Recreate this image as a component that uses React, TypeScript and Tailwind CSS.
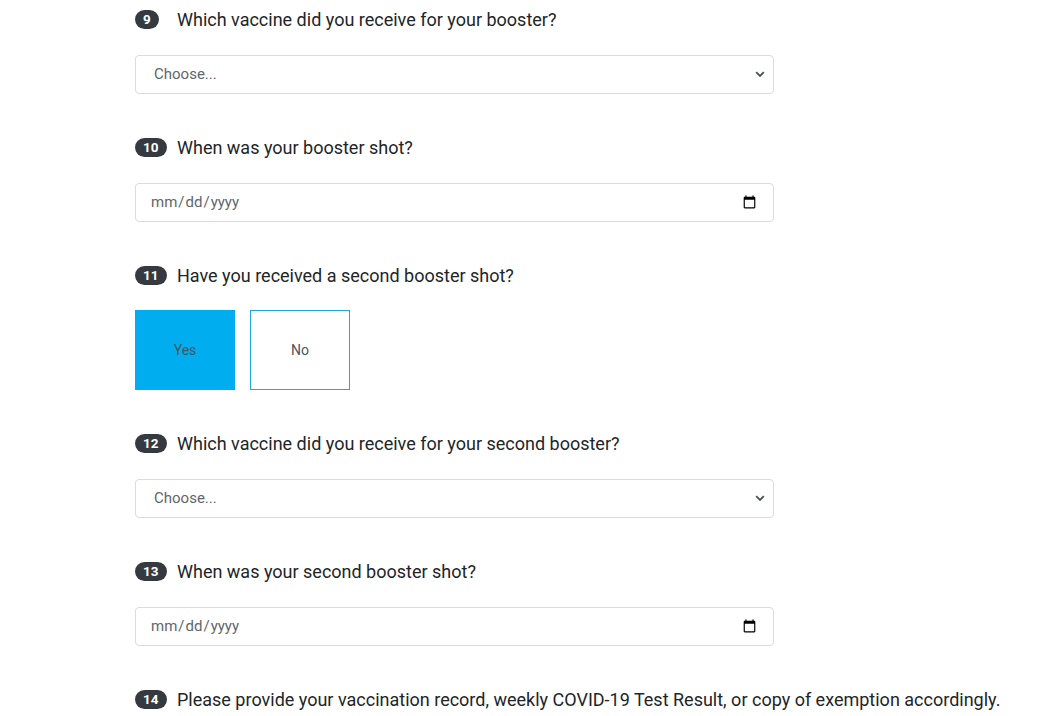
import React from "react";

const Badge = ({ n }: { n: string }) => (
  <div className="w-[42px] shrink-0 flex items-center">
    <span className="inline-flex items-center justify-center h-[19px] px-[8px] rounded-full bg-[#343a40] text-white text-[13.5px] font-bold leading-none">
      {n}
    </span>
  </div>
);

const Label = ({ n, text }: { n: string; text: string }) => (
  <div className="flex items-center h-[27px] text-[18px] text-[#212529] whitespace-nowrap">
    <Badge n={n} />
    <span>{text}</span>
  </div>
);

const Select = () => (
  <div className="relative mt-[22px] w-[639px]">
    <select
      defaultValue=""
      className="appearance-none w-full h-[39px] border border-[#dadde0] rounded-[4px] bg-white pl-[18px] pr-8 text-[15px] text-[#5f666c] outline-none"
      style={{ fontFamily: "Roboto, sans-serif" }}
    >
      <option value="">Choose...</option>
    </select>
    <svg
      className="absolute right-[9px] top-[16px] pointer-events-none"
      width="10"
      height="7"
      viewBox="0 0 10 7"
      fill="none"
    >
      <path d="M1.2 1.2L5 5L8.8 1.2" stroke="#4b5157" strokeWidth="1.8" />
    </svg>
  </div>
);

const DateInput = () => (
  <div className="mt-[22px] w-[639px]">
    <input
      type="date"
      className="w-full h-[39px] border border-[#dadde0] rounded-[4px] bg-white pl-[14px] pr-[14px] text-[15px] text-[#5f666c] outline-none"
      style={{ fontFamily: "Roboto, sans-serif" }}
    />
  </div>
);

export default function App() {
  return (
    <div
      className="min-h-[716px] bg-white pl-[135px] pt-[6px]"
      style={{ fontFamily: "Roboto, 'Liberation Sans', sans-serif" }}
    >
      <div className="mb-[40px]">
        <Label n="9" text="Which vaccine did you receive for your booster?" />
        <Select />
      </div>
      <div className="mb-[40px]">
        <Label n="10" text="When was your booster shot?" />
        <DateInput />
      </div>
      <div className="mb-[40px]">
        <Label n="11" text="Have you received a second booster shot?" />
        <div className="flex gap-[15px] mt-[21px]">
          <button className="w-[100px] h-[80px] bg-[#00aeef] border border-[#00aeef] text-[14px] text-[#3f5563]">
            Yes
          </button>
          <button className="w-[100px] h-[80px] bg-white border border-[#21a7dc] text-[14px] text-[#4a5560]">
            No
          </button>
        </div>
      </div>
      <div className="mb-[40px]">
        <Label n="12" text="Which vaccine did you receive for your second booster?" />
        <Select />
      </div>
      <div className="mb-[40px]">
        <Label n="13" text="When was your second booster shot?" />
        <DateInput />
      </div>
      <div>
        <Label
          n="14"
          text="Please provide your vaccination record, weekly COVID-19 Test Result, or copy of exemption accordingly."
        />
      </div>
    </div>
  );
}
